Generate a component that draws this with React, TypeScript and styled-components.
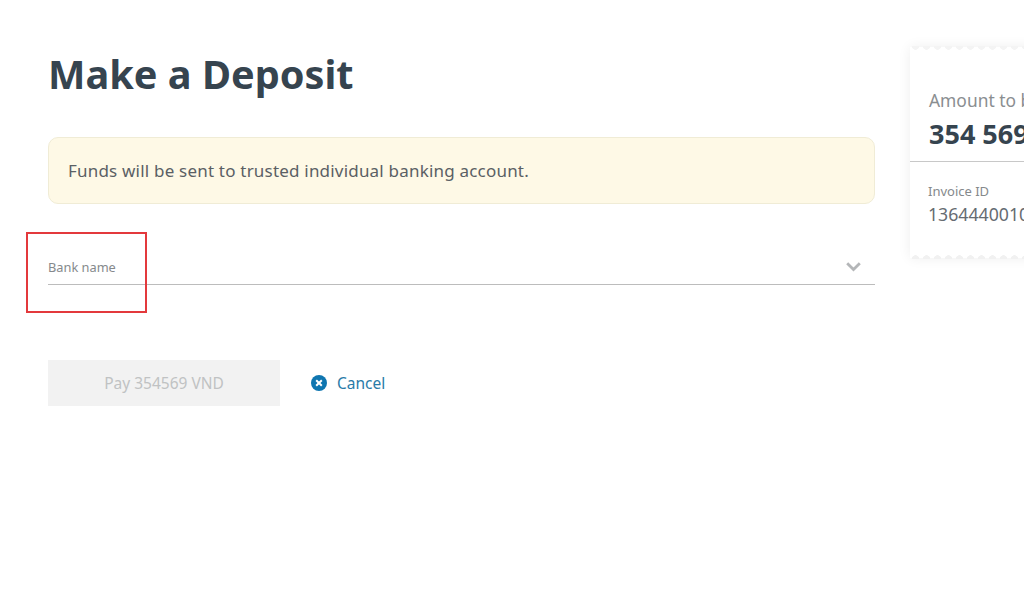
import styled, { createGlobalStyle } from "styled-components"

const GlobalStyle = createGlobalStyle`
  html, body {
    margin: 0;
    width: 1024px;
    height: 600px;
    overflow: hidden;
    background: #fff;
    font-family: "Noto Sans", "Open Sans", sans-serif;
  }
`

const Page = styled.div`
  position: relative;
  display: flex;
  align-items: flex-start;
  width: 1024px;
  height: 600px;
  overflow: hidden;
  box-sizing: border-box;
  padding-left: 48px;
`

const Main = styled.main`
  flex: 0 0 827px;
  width: 827px;
`

const Title = styled.h1`
  margin: 47px 0 0;
  font-size: 39.7px;
  line-height: 54px;
  font-weight: 700;
  color: #36444f;
`

const Notice = styled.div`
  box-sizing: border-box;
  height: 67px;
  margin-top: 36px;
  padding-left: 19px;
  display: flex;
  align-items: center;
  background: #fef9e6;
  border: 1px solid #f0ecd6;
  border-radius: 10px;
  color: #5a6064;
  font-size: 17px;
  letter-spacing: 0.2px;
`

const SelectField = styled.div`
  box-sizing: border-box;
  height: 49px;
  margin-top: 32px;
  display: flex;
  align-items: center;
  justify-content: space-between;
  padding: 14px 14px 0 0;
  border-bottom: 1px solid #bcbcbc;
`

const FieldLabel = styled.span`
  font-size: 12.8px;
  color: #85898c;
`

const Actions = styled.div`
  display: flex;
  align-items: center;
  margin-top: 75px;
`

const PayButton = styled.button`
  width: 232px;
  height: 46px;
  border: 0;
  padding: 0;
  background: #f2f2f2;
  color: #c0c2c3;
  font-family: inherit;
  font-size: 15.5px;
`

const CancelLink = styled.a`
  display: flex;
  align-items: center;
  gap: 10px;
  margin-left: 31px;
  color: #2a7ba8;
  font-size: 15.5px;
`

const Receipt = styled.aside`
  position: relative;
  flex: 0 0 240px;
  box-sizing: border-box;
  height: 211px;
  margin: 47px 0 0 35px;
  background: #fff;
  box-shadow: 0 0 12px rgba(0, 0, 0, 0.07);

  &::before,
  &::after {
    content: "";
    position: absolute;
    left: 0;
    right: 0;
    height: 5px;
    background-size: 11px 5px;
    background-repeat: repeat-x;
  }

  &::before {
    top: -1px;
    background-image: radial-gradient(circle at 50% 0, #f4f4f4 3.5px, transparent 4px);
  }

  &::after {
    bottom: -1px;
    background-image: radial-gradient(circle at 50% 100%, #f1f1f1 3.5px, transparent 4px);
  }
`

const ReceiptHead = styled.div`
  box-sizing: border-box;
  height: 115px;
  padding: 40px 0 0 19px;
  border-bottom: 1px solid #c8c8c8;
  white-space: nowrap;
`

const AmountLabel = styled.div`
  font-size: 17.4px;
  line-height: 26px;
  color: #8a8e91;
`

const AmountValue = styled.div`
  font-size: 27px;
  line-height: 42px;
  font-weight: 700;
  color: #36444f;
`

const ReceiptBody = styled.div`
  padding: 20px 0 0 18px;
  white-space: nowrap;
`

const InvoiceLabel = styled.div`
  font-size: 13px;
  line-height: 18px;
  color: #85898c;
`

const InvoiceValue = styled.div`
  font-size: 17.7px;
  line-height: 28px;
  color: #666c72;
`

const Highlight = styled.div`
  position: absolute;
  left: 26px;
  top: 232px;
  width: 121px;
  height: 81px;
  box-sizing: border-box;
  border: 2px solid #e3393c;
  pointer-events: none;
`

const Chevron = () => (
  <svg width="15" height="10" viewBox="0 0 15 10" fill="none">
    <path d="M1.2 1.2 7.5 7.5l6.3-6.3" stroke="#b4b6b8" strokeWidth="2.8" />
  </svg>
)

const CancelIcon = () => (
  <svg width="16" height="16" viewBox="0 0 16 16" fill="none">
    <circle cx="8" cy="8" r="8" fill="#0f76b0" />
    <path d="M5.2 5.2l5.6 5.6M10.8 5.2l-5.6 5.6" stroke="#fff" strokeWidth="2" />
  </svg>
)

const App = () => {
  return (
    <Page>
      <GlobalStyle />
      <Main>
        <Title>Make a Deposit</Title>
        <Notice>Funds will be sent to trusted individual banking account.</Notice>
        <SelectField>
          <FieldLabel>Bank name</FieldLabel>
          <Chevron />
        </SelectField>
        <Actions>
          <PayButton disabled>Pay 354569 VND</PayButton>
          <CancelLink>
            <CancelIcon />
            Cancel
          </CancelLink>
        </Actions>
      </Main>
      <Receipt>
        <ReceiptHead>
          <AmountLabel>Amount to be paid</AmountLabel>
          <AmountValue>354 569 VND</AmountValue>
        </ReceiptHead>
        <ReceiptBody>
          <InvoiceLabel>Invoice ID</InvoiceLabel>
          <InvoiceValue>1364440010</InvoiceValue>
        </ReceiptBody>
      </Receipt>
      <Highlight />
    </Page>
  )
}

export default App
